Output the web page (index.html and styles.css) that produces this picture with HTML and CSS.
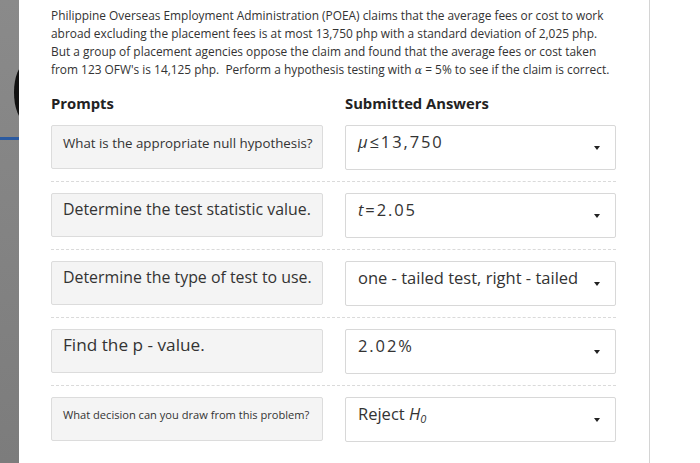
FILE: index.html
```html
<!DOCTYPE html>
<html>
<head>
<meta charset="utf-8">
<link rel="stylesheet" href="styles.css">
</head>
<body>
<div class="page">
  <aside class="side">
    <div class="ring"></div>
    <div class="blue"></div>
  </aside>
  <main class="main">
    <p class="problem">Philippine Overseas Employment Administration (POEA) claims that the average fees or cost to work<br>abroad excluding the placement fees is at most 13,750 php with a standard deviation of 2,025 php.<br>But a group of placement agencies oppose the claim and found that the average fees or cost taken<br>from 123 OFW's is 14,125 php.&nbsp; Perform a hypothesis testing with <i class="m">α</i> = 5% to see if the claim is correct.</p>
    <div class="heads">
      <div class="head">Prompts</div>
      <div class="head">Submitted Answers</div>
    </div>
    <div class="row">
      <div class="prompt fs1">What is the appropriate null hypothesis?</div>
      <div class="answer"><span class="num"><i>μ</i>≤13,750</span><span class="caret"></span></div>
    </div>
    <div class="row">
      <div class="prompt fs2">Determine the test statistic value.</div>
      <div class="answer"><span class="num"><i>t</i>=2.05</span><span class="caret"></span></div>
    </div>
    <div class="row">
      <div class="prompt fs2">Determine the type of test to use.</div>
      <div class="answer"><span>one - tailed test, right - tailed</span><span class="caret"></span></div>
    </div>
    <div class="row">
      <div class="prompt fs3">Find the p - value.</div>
      <div class="answer"><span class="num">2.02%</span><span class="caret"></span></div>
    </div>
    <div class="row last">
      <div class="prompt fs4">What decision can you draw from this problem?</div>
      <div class="answer"><span>Reject <i>H<sub>0</sub></i></span><span class="caret"></span></div>
    </div>
  </main>
  <div class="rest"></div>
</div>
</body>
</html>
```
FILE: styles.css
```css
html, body {
  margin: 0;
  padding: 0;
  background: #fff;
}
body {
  font-family: "Open Sans", "DejaVu Sans", sans-serif;
  color: #333;
  width: 700px;
  height: 463px;
  overflow: hidden;
}
.page {
  display: flex;
  height: 463px;
}
.side {
  width: 19px;
  flex: none;
  background: linear-gradient(#8a8a8a, #7c7c7c);
  position: relative;
  overflow: hidden;
}
.ring {
  position: absolute;
  left: 14px;
  top: 64px;
  width: 24px;
  height: 57px;
  background: #111;
  border-radius: 50%;
}
.blue {
  position: absolute;
  left: 0;
  top: 137px;
  width: 19px;
  height: 3px;
  background: #2b5aa0;
}
.main {
  width: 598px;
  flex: none;
  padding: 6px 0 0 32px;
  border-right: 1px solid #d4d4d4;
}
.problem {
  margin: 0;
  font-size: 11.9px;
  line-height: 18px;
  color: #333;
  white-space: nowrap;
}
.m {
  font-family: "DejaVu Serif", serif;
  font-size: 11px;
}
.heads {
  display: grid;
  grid-template-columns: 272px 271px;
  column-gap: 22px;
  margin-top: 13px;
  height: 32px;
}
.head {
  font-weight: 700;
  font-size: 14.8px;
  line-height: 20px;
  color: #222;
}
.row {
  display: grid;
  grid-template-columns: 272px 271px;
  column-gap: 22px;
  padding-bottom: 11px;
  margin-bottom: 11px;
  border-bottom: 1px dashed #dadada;
  width: 565px;
}
.row.last {
  border-bottom: none;
}
.prompt {
  box-sizing: border-box;
  height: 44px;
  background: #f4f4f4;
  border: 1px solid #dcdcdc;
  border-radius: 2px;
  padding: 6px 11px 0;
  color: #333;
  white-space: nowrap;
}
.fs1 { font-size: 13.3px; line-height: 20px; padding-top: 7px; }
.fs2 { font-size: 15.9px; line-height: 20px; padding-top: 5px; }
.fs3 { font-size: 17.2px; line-height: 20px; padding-top: 5px; }
.fs4 { font-size: 11.1px; line-height: 20px; padding-top: 7px; }
.answer {
  box-sizing: border-box;
  height: 45px;
  background: #fff;
  border: 1px solid #d8d8d8;
  border-radius: 2px;
  padding: 5px 12px 0 12px;
  font-size: 16.5px;
  line-height: 22px;
  color: #333;
  display: flex;
  justify-content: space-between;
  white-space: nowrap;
}
.num {
  letter-spacing: 1.9px;
}
.answer i {
  font-style: italic;
}
.answer sub {
  font-size: 11px;
  vertical-align: -3px;
}
.caret {
  width: 0;
  height: 0;
  border-left: 3.5px solid transparent;
  border-right: 3.5px solid transparent;
  border-top: 4px solid #222;
  margin-top: 15px;
  margin-right: 3px;
}
.rest {
  flex: 1;
}
```
